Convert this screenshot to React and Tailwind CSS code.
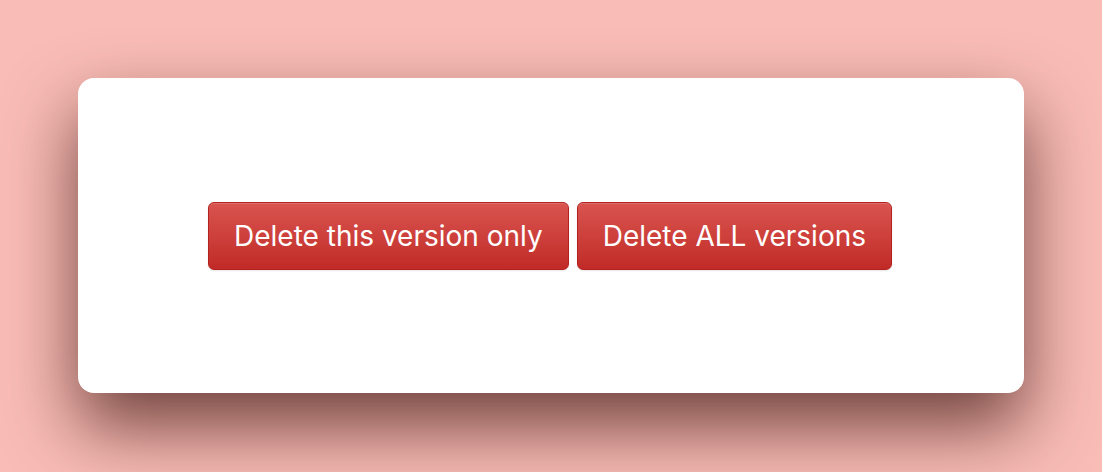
export default function App() {
  const btn =
    "h-[68px] px-[25px] rounded-[6px] border border-[#b3221f] bg-gradient-to-b from-[#d9534f] to-[#c12a26] text-white text-[28px] leading-none font-['Inter',sans-serif] shadow-[inset_0_1px_0_rgba(255,255,255,0.15),0_1px_2px_rgba(0,0,0,0.1)]";
  return (
    <div className="w-[1102px] h-[472px] bg-[#f9bcb6] pt-[78px] pl-[78px] overflow-hidden font-['Inter',sans-serif]">
      <div className="w-[946px] h-[315px] bg-white rounded-[16px] shadow-[0_34px_70px_rgba(50,10,5,0.68)] flex items-center justify-center gap-[8px] pr-[2px]">
        <button className={btn}>Delete this version only</button>
        <button className={btn}>Delete ALL versions</button>
      </div>
    </div>
  );
}
